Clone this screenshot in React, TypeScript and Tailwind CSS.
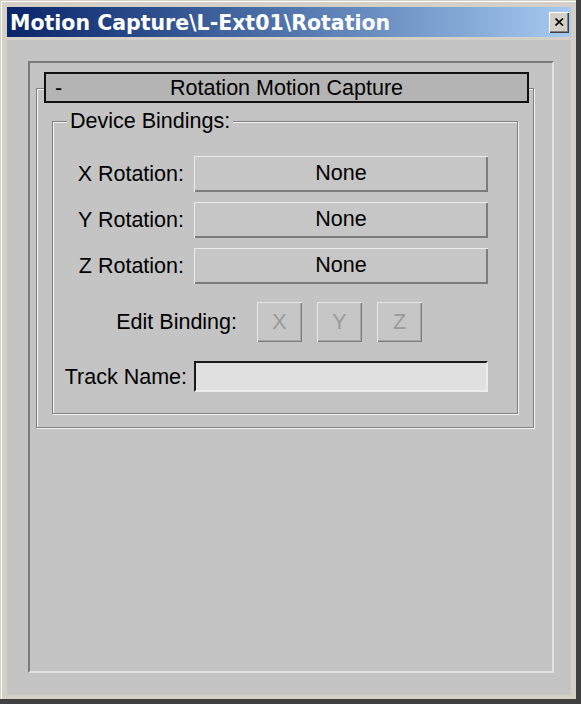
const etched = "border border-[#808080] shadow-[inset_1px_1px_0_#f4f4f4,1px_1px_0_#f4f4f4]";
const raised = "shadow-[inset_1px_1px_0_#ececec,inset_-2px_-2px_0_#7c7c7c]";

function RotationRow({ label }: { label: string }) {
    return (
        <div className="flex items-center gap-[10px]">
            <div className="w-[131px] text-right">{label}</div>
            <button className={`w-[294px] h-[36px] pb-[3px] bg-[#c6c6c6] ${raised}`}>None</button>
        </div>
    );
}

export default function App() {
    return (
        <div
            className="w-[581px] h-[704px] flex flex-col bg-[#d4d0c8] border-r-[5px] border-b-[5px] border-[#404040] pl-[7px] pt-[7px] pr-[5px] pb-[4px] shadow-[inset_1px_1px_0_#d4d0c8,inset_2px_2px_0_#ffffff] text-[21.5px] text-black leading-[24px]"
            style={{ fontFamily: '"Liberation Sans", Arial, sans-serif' }}
        >
            {/* title bar */}
            <div className="h-[30px] flex items-center pl-[3px] pr-[2px] bg-gradient-to-r from-[#0a246a] to-[#a6caf0]">
                <span className="text-white font-bold text-[20.5px] pt-[1px]" style={{ fontFamily: '"DejaVu Sans", Verdana, sans-serif' }}>
                    Motion Capture\L-Ext01\Rotation
                </span>
                <div className="ml-auto w-[20px] h-[21px] bg-[#d4d0c8] flex items-center justify-center shadow-[inset_1px_1px_0_#ffffff,inset_-1px_-1px_0_#404040,inset_-2px_-2px_0_#808080]">
                    <svg width="9" height="8" viewBox="0 0 9 8" className="mb-[1px]">
                        <path d="M0.5 0.5 L8 7.5 M8 0.5 L0.5 7.5" stroke="#000" strokeWidth="1.6" />
                    </svg>
                </div>
            </div>

            {/* client area */}
            <div className="mt-[3px] flex-1 flex flex-col bg-[#c4c4c4] pl-[21px] pt-[21px] pr-[17px] pb-[22px]">
                <div className="flex-1 flex flex-col border-2 border-l-[#7a7a7a] border-t-[#7a7a7a] border-r-[#e2e2e2] border-b-[#e2e2e2]">
                    {/* rollout header */}
                    <div className="relative z-10 ml-[14px] mt-[9px] w-[485px] h-[31px] border-2 border-[#101010] bg-[#b4b4b4] grid grid-cols-[40px_1fr_40px] items-center">
                        <span className="pl-[9px]">-</span>
                        <span className="text-center">Rotation Motion Capture</span>
                        <span />
                    </div>

                    {/* rollout body */}
                    <div className={`ml-[6px] -mt-[15px] w-[498px] pl-[15px] pt-[32px] pb-[13px] ${etched}`}>
                        <div className={`w-[466px] pb-[21px] ${etched}`}>
                            <div className="w-fit ml-[14px] -mt-[13px] px-[3px] bg-[#c4c4c4]">Device Bindings:</div>

                            <div className="mt-[23px] flex flex-col gap-[10px]">
                                <RotationRow label="X Rotation:" />
                                <RotationRow label="Y Rotation:" />
                                <RotationRow label="Z Rotation:" />
                            </div>

                            <div className="mt-[18px] flex items-center">
                                <div className="w-[184px] text-right">Edit Binding:</div>
                                <div className="ml-[20px] flex gap-[15px]">
                                    {["X", "Y", "Z"].map(l => (
                                        <button key={l} className="w-[45px] h-[40px] bg-[#c6c6c6] text-[#9a9a9a] shadow-[inset_1px_1px_0_#e6e6e6,inset_-1px_-1px_0_#7c7c7c,inset_-2px_-2px_0_#a8a8a8]">{l}</button>
                                    ))}
                                </div>
                            </div>

                            <div className="mt-[19px] flex items-center">
                                <div className="w-[134px] text-right">Track Name:</div>
                                <input
                                    type="text"
                                    className="ml-[7px] w-[294px] h-[31px] bg-[#e0e0e0] outline-none border-2 border-l-[#1a1a1a] border-t-[#1a1a1a] border-r-[#ececec] border-b-[#ececec]"
                                />
                            </div>
                        </div>
                    </div>
                </div>
            </div>
        </div>
    );
}
